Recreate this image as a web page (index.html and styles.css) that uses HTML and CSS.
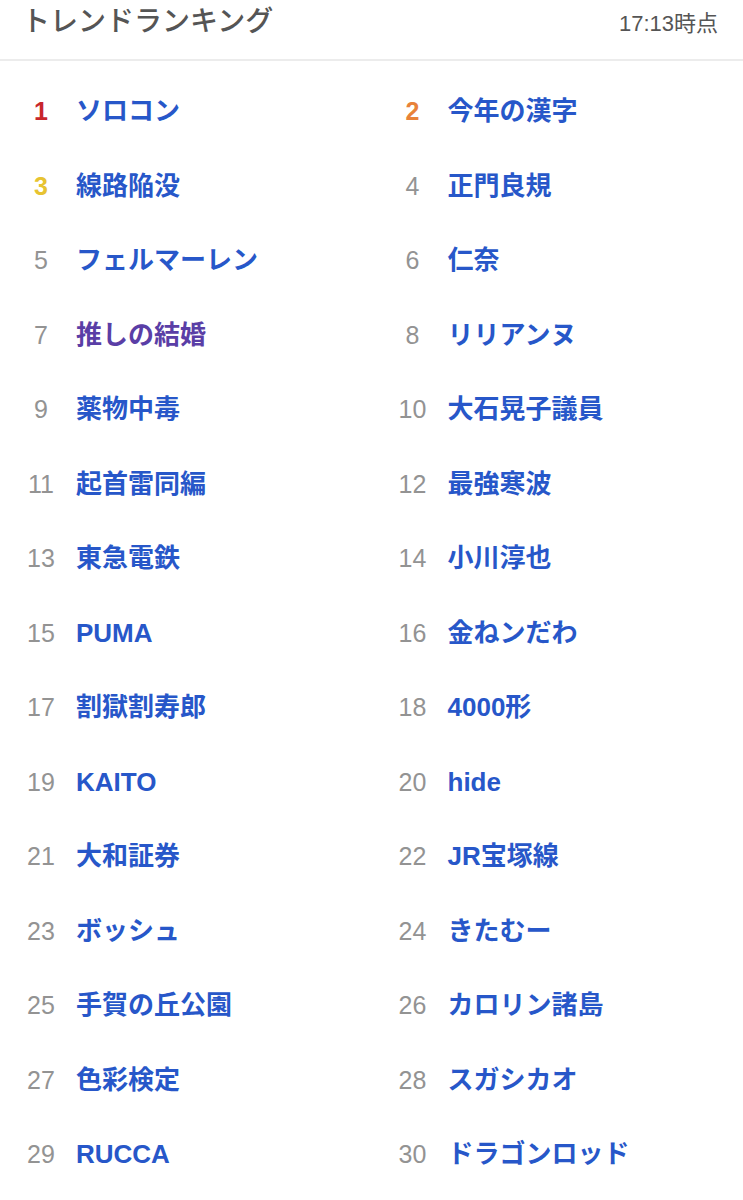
FILE: index.html
```html
<!DOCTYPE html>
<html lang="ja">
<head>
<meta charset="utf-8">
<title>トレンドランキング</title>
<link rel="stylesheet" href="styles.css">
</head>
<body>
<div class="page">
  <header class="head">
    <h1 class="title">トレンドランキング</h1>
    <span class="time">17:13時点</span>
  </header>
  <ol class="rank-list">
    <li class="item"><span class="num top1">1</span><a class="term">ソロコン</a></li>
    <li class="item"><span class="num top2">2</span><a class="term">今年の漢字</a></li>
    <li class="item"><span class="num top3">3</span><a class="term">線路陥没</a></li>
    <li class="item"><span class="num">4</span><a class="term">正門良規</a></li>
    <li class="item"><span class="num">5</span><a class="term">フェルマーレン</a></li>
    <li class="item"><span class="num">6</span><a class="term">仁奈</a></li>
    <li class="item"><span class="num">7</span><a class="term visited">推しの結婚</a></li>
    <li class="item"><span class="num">8</span><a class="term">リリアンヌ</a></li>
    <li class="item"><span class="num">9</span><a class="term">薬物中毒</a></li>
    <li class="item"><span class="num">10</span><a class="term">大石晃子議員</a></li>
    <li class="item"><span class="num">11</span><a class="term">起首雷同編</a></li>
    <li class="item"><span class="num">12</span><a class="term">最強寒波</a></li>
    <li class="item"><span class="num">13</span><a class="term">東急電鉄</a></li>
    <li class="item"><span class="num">14</span><a class="term">小川淳也</a></li>
    <li class="item"><span class="num">15</span><a class="term">PUMA</a></li>
    <li class="item"><span class="num">16</span><a class="term">金ねンだわ</a></li>
    <li class="item"><span class="num">17</span><a class="term">割獄割寿郎</a></li>
    <li class="item"><span class="num">18</span><a class="term">4000形</a></li>
    <li class="item"><span class="num">19</span><a class="term">KAITO</a></li>
    <li class="item"><span class="num">20</span><a class="term">hide</a></li>
    <li class="item"><span class="num">21</span><a class="term">大和証券</a></li>
    <li class="item"><span class="num">22</span><a class="term">JR宝塚線</a></li>
    <li class="item"><span class="num">23</span><a class="term">ボッシュ</a></li>
    <li class="item"><span class="num">24</span><a class="term">きたむー</a></li>
    <li class="item"><span class="num">25</span><a class="term">手賀の丘公園</a></li>
    <li class="item"><span class="num">26</span><a class="term">カロリン諸島</a></li>
    <li class="item"><span class="num">27</span><a class="term">色彩検定</a></li>
    <li class="item"><span class="num">28</span><a class="term">スガシカオ</a></li>
    <li class="item"><span class="num">29</span><a class="term">RUCCA</a></li>
    <li class="item"><span class="num">30</span><a class="term">ドラゴンロッド</a></li>
  </ol>
</div>
</body>
</html>
```

FILE: styles.css
```css
* { box-sizing: border-box; }
html, body { margin: 0; padding: 0; background: #ffffff; }
body {
  font-family: "Liberation Sans", "Noto Sans CJK JP", sans-serif;
  width: 743px;
}
.page { width: 743px; }
.head {
  display: flex;
  justify-content: space-between;
  align-items: baseline;
  height: 61px;
  padding: 0 25px 0 22px;
  border-bottom: 2px solid #ececec;
}
.title {
  margin: 0;
  font-family: "Noto Sans CJK JP", sans-serif;
  font-size: 28px;
  font-weight: 500;
  color: #555555;
  line-height: 39px;
}
.time {
  font-family: "Liberation Sans", "Noto Sans CJK JP", sans-serif;
  font-size: 22px;
  color: #555555;
  line-height: 39px;
}
.rank-list {
  list-style: none;
  margin: 0;
  padding: 13px 0 0 0;
  display: grid;
  grid-template-columns: 1fr 1fr;
  grid-auto-rows: 74.5px;
}
.item {
  display: flex;
  align-items: baseline;
  padding-left: 22px;
  line-height: 74.5px;
}
.num {
  width: 38px;
  text-align: center;
  font-family: "Liberation Sans", sans-serif;
  font-size: 25px;
  color: #939393;
  margin-right: 16px;
}
.num.top1, .num.top2, .num.top3 { font-weight: 700; }
.num.top1 { color: #c8262c; }
.num.top2 { color: #e8823a; }
.num.top3 { color: #e7c331; }
.term {
  font-family: "Liberation Sans", "Noto Sans CJK JP", sans-serif;
  font-size: 26px;
  font-weight: 700;
  color: #2757c9;
  text-decoration: none;
}
.term.visited { color: #5a3ea6; }
```
